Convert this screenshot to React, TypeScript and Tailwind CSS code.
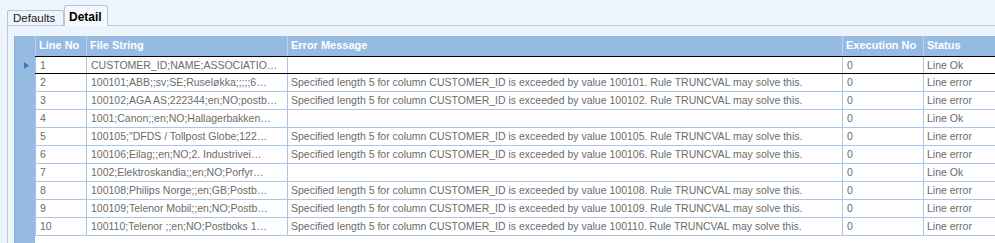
import React from "react";

const rows: [string, string, string, string, string][] = [
  ["1", "CUSTOMER_ID;NAME;ASSOCIATIO…", "", "0", "Line Ok"],
  ["2", "100101;ABB;;sv;SE;Ruseløkka;;;;;6…", "100101", "0", "Line error"],
  ["3", "100102;AGA AS;222344;en;NO;postb…", "100102", "0", "Line error"],
  ["4", "1001;Canon;;en;NO;Hallagerbakken…", "", "0", "Line Ok"],
  ["5", "100105;\"DFDS / Tollpost Globe;122…", "100105", "0", "Line error"],
  ["6", "100106;Eilag;;en;NO;2. Industrivei…", "100106", "0", "Line error"],
  ["7", "1002;Elektroskandia;;en;NO;Porfyr…", "", "0", "Line Ok"],
  ["8", "100108;Philips Norge;;en;GB;Postb…", "100108", "0", "Line error"],
  ["9", "100109;Telenor Mobil;;en;NO;Postb…", "100109", "0", "Line error"],
  ["10", "100110;Telenor ;;en;NO;Postboks 1…", "100110", "0", "Line error"],
];

const font = { fontFamily: '"Liberation Sans", Arial, sans-serif' };

export default function App() {
  return (
    <div className="w-[995px] h-[243px] overflow-hidden bg-[#eef4fb] text-[10.5px]" style={font}>
      {/* tabs */}
      <div className="flex items-end h-[25px] pl-[7px]">
        <div className="h-[15px] w-[57px] border border-b-0 border-[#a9c6e6] bg-[#eef4fb] rounded-t-[2px] text-[11.5px] text-[#222] pl-[5px] leading-[14px]">
          Defaults
        </div>
        <div className="h-[21px] w-[44px] border border-b-0 border-[#a9c6e6] bg-[#f5f9fd] rounded-t-[3px] text-[12px] font-bold text-black pl-[4px] pt-[4px] leading-[14px] -mb-px relative z-10">
          Detail
        </div>
      </div>
      {/* panel */}
      <div className="ml-[7px] h-[218px] border-l border-t border-[#b4cde9] pt-[10px] pl-[6px] bg-[#eef4fb]">
        <div className="flex h-full">
          {/* indicator column */}
          <div className="w-[21px] shrink-0 bg-[#95bbe2] border-l border-[#86afd9] flex flex-col">
            <div className="h-[20px]" />
            <div className="h-[18px] flex items-center pl-[9px]">
              <svg width="5" height="7" viewBox="0 0 5 7">
                <path d="M0 0 L5 3.5 L0 7 Z" fill="#3d7bc4" />
              </svg>
            </div>
          </div>
          <div className="flex-1 bg-white flex flex-col">
            {/* header */}
            <div className="flex h-[20px] bg-[#95bbe2] text-white font-bold text-[11px] leading-[19px]">
              <div className="w-[51px] shrink-0 pl-[3px] border-l border-[#b9d3ee] whitespace-nowrap overflow-hidden">Line No</div>
              <div className="w-[201px] shrink-0 pl-[3px] border-l border-[#b9d3ee] whitespace-nowrap overflow-hidden">File String</div>
              <div className="w-[555px] shrink-0 pl-[3px] border-l border-[#b9d3ee] whitespace-nowrap overflow-hidden">Error Message</div>
              <div className="w-[81px] shrink-0 pl-[3px] border-l border-[#b9d3ee] whitespace-nowrap overflow-hidden">Execution No</div>
              <div className="flex-1 pl-[3px] border-l border-[#b9d3ee] whitespace-nowrap overflow-hidden">Status</div>
            </div>
            {rows.map((r, i) => {
              const first = i === 0;
              return (
                <div
                  key={r[0]}
                  className={
                    "flex h-[18px] text-[#6b6b6b] leading-[17px] border-b " +
                    (first ? "border-t border-t-black border-b-black" : "border-[#a9c6e6]")
                  }
                >
                  <div className="w-[51px] shrink-0 pl-[4px] border-l border-[#a9c6e6] whitespace-nowrap overflow-hidden">{r[0]}</div>
                  <div className="w-[201px] shrink-0 pl-[4px] border-l border-[#a9c6e6] whitespace-nowrap overflow-hidden">{r[1]}</div>
                  <div className="w-[555px] shrink-0 pl-[3px] border-l border-[#a9c6e6] whitespace-nowrap overflow-hidden">
                    {r[2]
                      ? `Specified length 5 for column CUSTOMER_ID is exceeded by value ${r[2]}. Rule TRUNCVAL may solve this.`
                      : ""}
                  </div>
                  <div className="w-[81px] shrink-0 pl-[4px] border-l border-[#a9c6e6] whitespace-nowrap overflow-hidden">{r[3]}</div>
                  <div className="flex-1 pl-[3px] border-l border-[#a9c6e6] whitespace-nowrap overflow-hidden">{r[4]}</div>
                </div>
              );
            })}
          </div>
        </div>
      </div>
    </div>
  );
}
